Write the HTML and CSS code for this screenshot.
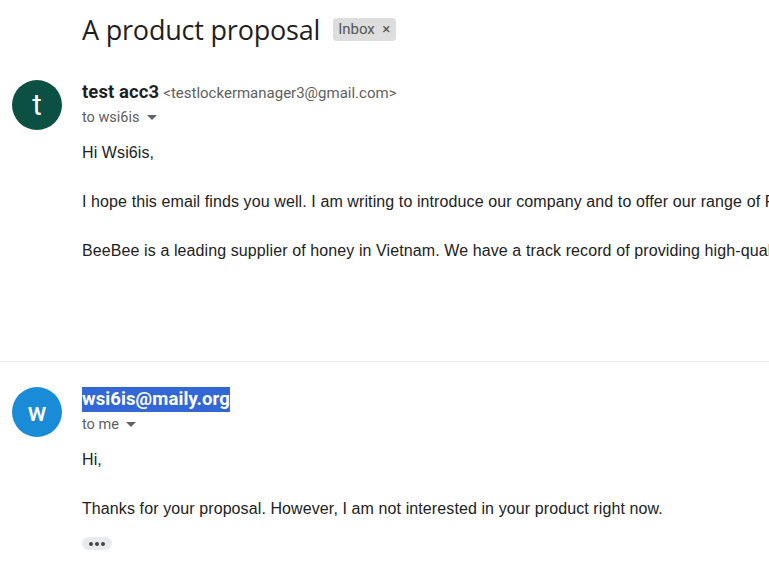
FILE: index.html
```html
<!DOCTYPE html>
<html>
<head>
<meta charset="utf-8">
<link rel="stylesheet" href="styles.css">
</head>
<body>
<div class="page">
  <div class="subject-row">
    <h1 class="subject">A product proposal</h1>
    <span class="chip">Inbox <span class="chip-x">×</span></span>
  </div>

  <div class="message first">
    <div class="avatar green">t</div>
    <div class="content">
      <div class="from"><span class="name">test acc3</span> <span class="addr">&lt;testlockermanager3@gmail.com&gt;</span></div>
      <div class="to">to wsi6is <svg class="caret" width="10" height="6" viewBox="0 0 10 6"><path d="M0 0h10L5 5z" fill="#5f6368"/></svg></div>
      <div class="body">
        <p>Hi Wsi6is,</p>
        <p>I hope this email finds you well. I am writing to introduce our company and to offer our range of Products and services to your business.</p>
        <p>BeeBee is a leading supplier of honey in Vietnam. We have a track record of providing high-quality products to our customers.</p>
      </div>
    </div>
  </div>

  <div class="divider"></div>

  <div class="message second">
    <div class="avatar blue">w</div>
    <div class="content">
      <div class="from"><span class="name selected">wsi6is@maily.org</span></div>
      <div class="to">to me <svg class="caret" width="10" height="6" viewBox="0 0 10 6"><path d="M0 0h10L5 5z" fill="#5f6368"/></svg></div>
      <div class="body">
        <p>Hi,</p>
        <p>Thanks for your proposal. However, I am not interested in your product right now.</p>
      </div>
      <div class="more"><span></span><span></span><span></span></div>
    </div>
  </div>
</div>
</body>
</html>
```
FILE: styles.css
```css
html, body {
  margin: 0;
  padding: 0;
  background: #fff;
  overflow: hidden;
}
body {
  width: 769px;
  height: 573px;
  font-family: "Liberation Sans", Arial, sans-serif;
  color: #222;
}
.page {
  padding-top: 10px;
  width: 769px;
  overflow: hidden;
}
.subject-row {
  display: flex;
  align-items: center;
  padding-left: 82px;
  height: 38px;
}
.subject {
  margin: 0;
  font-family: "Open Sans", sans-serif;
  font-weight: 400;
  font-size: 27px;
  color: #1f1f1f;
  letter-spacing: -0.2px;
}
.chip {
  margin-left: 13px;
  background: #dddddd;
  color: #555;
  font-family: Roboto, sans-serif;
  font-size: 15px;
  border-radius: 4px;
  padding: 0 6px 0 5px;
  height: 23px;
  line-height: 23px;
  width: 52px;
  display: flex;
  justify-content: space-between;
}
.chip-x {
  font-size: 15px;
  color: #555;
}
.message {
  display: flex;
  padding-left: 12px;
}
.message.first {
  margin-top: 32px;
  height: 281px;
}
.avatar {
  width: 50px;
  height: 50px;
  border-radius: 50%;
  color: #fff;
  display: flex;
  align-items: center;
  justify-content: center;
  font-family: Roboto, sans-serif;
  flex-shrink: 0;
}
.avatar.green {
  background: #0b5042;
  font-size: 29px;
}
.avatar.blue {
  background: #1a8bd6;
  font-size: 25px;
  font-weight: 500;
}
.content {
  margin-left: 20px;
  flex: 1;
  min-width: 0;
  overflow: hidden;
}
.from {
  font-family: Roboto, sans-serif;
  height: 24px;
  line-height: 24px;
  white-space: nowrap;
}
.name {
  font-weight: 700;
  font-size: 18.5px;
  color: #1f1f1f;
  letter-spacing: 0.1px;
}
.addr {
  font-size: 15px;
  color: #5e5e5e;
}
.name.selected {
  background: #3367d6;
  color: #fff;
  padding: 1px 0 2px;
}
.to {
  font-family: Roboto, sans-serif;
  font-size: 14.5px;
  color: #5e5e5e;
  height: 20px;
  line-height: 20px;
  display: flex;
  align-items: center;
  margin-top: 4px;
}
.caret {
  margin-left: 7px;
}
.body {
  margin-top: 13px;
  font-size: 16px;
  line-height: 24.5px;
  letter-spacing: 0.1px;
  white-space: nowrap;
  color: #222;
}
.body p {
  margin: 0 0 24.5px;
}
.divider {
  height: 1px;
  background: #ebebeb;
}
.message.second {
  margin-top: 25px;
}
.more {
  display: flex;
  gap: 2px;
  align-items: center;
  justify-content: center;
  width: 30px;
  height: 13px;
  border-radius: 7px;
  background: #e8eaed;
  margin-top: -9px;
}
.more span {
  width: 4px;
  height: 4px;
  border-radius: 50%;
  background: #444;
}
```
